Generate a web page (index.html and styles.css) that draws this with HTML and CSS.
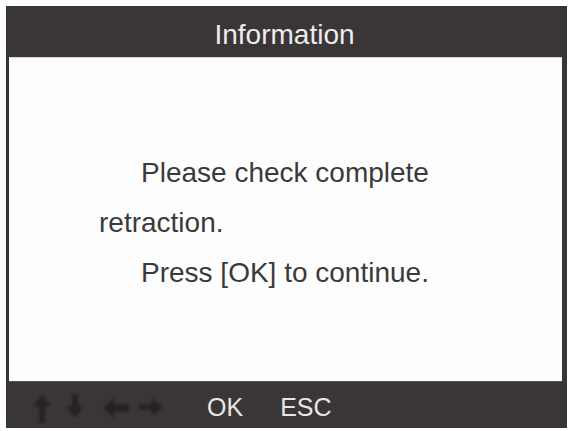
FILE: index.html
```html
<!DOCTYPE html>
<html lang="en">
<head>
<meta charset="utf-8">
<title>Information</title>
<link rel="stylesheet" href="styles.css">
</head>
<body>
<div class="screen">
  <header class="title">Information</header>
  <main class="content">
    <p class="msg"><span class="indent">Please check complete</span><br>retraction.<br><span class="indent">Press [OK] to continue.</span></p>
  </main>
  <footer class="keys">
    <svg class="key k-up" viewBox="0 0 20 30" width="20" height="30"><path d="M10 1 L19 12 L13 12 L13 29 L7 29 L7 12 L1 12 Z"/></svg>
    <svg class="key k-down" viewBox="0 0 20 26" width="20" height="26"><path d="M7 1 L13 1 L13 13 L19 13 L10 25 L1 13 L7 13 Z"/></svg>
    <svg class="key k-left" viewBox="0 0 28 22" width="28" height="22"><path d="M1 11 L12 1 L12 7 L27 7 L27 15 L12 15 L12 21 Z"/></svg>
    <svg class="key k-right" viewBox="0 0 26 20" width="26" height="20"><path d="M25 10 L14 1 L14 7 L1 7 L1 13 L14 13 L14 19 Z"/></svg>
    <span class="label l-ok">OK</span>
    <span class="label l-esc">ESC</span>
  </footer>
</div>
</body>
</html>
```

FILE: styles.css
```css
html, body {
  margin: 0;
  padding: 0;
  background: #ffffff;
}

body {
  font-family: "Liberation Sans", Arial, sans-serif;
}

.screen {
  margin: 6px 0 0 6px;
  width: 561px;
  height: 422px;
  box-sizing: border-box;
  background: #3a3637;
  border-left: 3px solid #3a3637;
  border-right: 5px solid #3a3637;
  display: flex;
  flex-direction: column;
}

.title {
  height: 51px;
  box-sizing: border-box;
  padding-top: 7px;
  line-height: 44px;
  font-size: 28px;
  color: #ececec;
  text-align: center;
  padding-right: 2px;
}

.content {
  flex: 1;
  background: #fdfdfd;
  border-top: 1px solid #d8d8d8;
  padding: 90px 0 0 90px;
}

.msg {
  margin: 0;
  font-size: 28px;
  line-height: 50px;
  color: #3a3a3a;
}

.indent {
  padding-left: 42px;
}

.keys {
  height: 47px;
  box-sizing: border-box;
  display: flex;
  align-items: center;
  padding-left: 23px;
  border-top: 1px solid #555;
}

.key {
  fill: #252223;
  filter: blur(1.4px);
  flex: none;
}

.k-up { margin-top: 8px; }
.k-down { margin-left: 13px; margin-top: 2px; }
.k-left { margin-left: 17px; margin-top: 6px; }
.k-right { margin-left: 8px; margin-top: 4px; }

.label {
  font-size: 25px;
  line-height: 43px;
  padding-top: 4px;
  color: #e6e6e6;
}

.l-ok { margin-left: 43px; }
.l-esc { margin-left: 37px; }
```
